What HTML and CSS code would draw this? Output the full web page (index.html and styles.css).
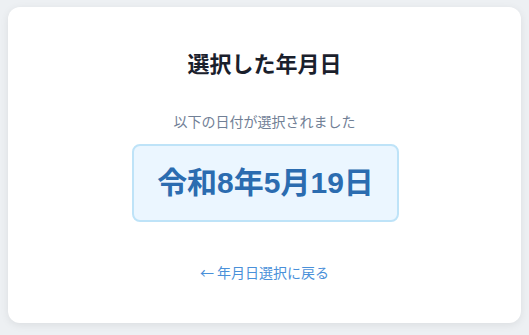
FILE: index.html
```html
<html lang="ja">
  <head>
    <meta charset="UTF-8" />
    <meta name="viewport" content="width=device-width, initial-scale=1.0" />
    <title>選択した年月日</title>
    <link rel="stylesheet" href="styles.css">
  </head>
  <body>
    <div class="card">
      <h1 class="title">選択した年月日</h1>
      <p class="lead">以下の日付が選択されました</p>
      <div class="date-box">
        <span class="date-text">令和8年5月19日</span>
      </div>
      <a class="back-link" href="#">← 年月日選択に戻る</a>
    </div>
  </body>
</html>
```

FILE: styles.css
```css
body {
  font-family: "Liberation Sans", "Noto Sans CJK JP", sans-serif;
  margin: 0;
  padding: 7px 8px;
  background-color: #edf0f3;
}

.card {
  display: flex;
  flex-direction: column;
  align-items: center;
  padding: 40px 20px;
  background-color: #fff;
  border-radius: 12px;
  box-shadow: 0 2px 8px rgba(0, 0, 0, 0.08);
}

.title {
  margin: 0 0 34px;
  font-family: "Noto Sans CJK JP", sans-serif;
  font-size: 22px;
  line-height: 31px;
  font-weight: bold;
  color: #1a202c;
}

.lead {
  margin: 0 0 11px;
  font-size: 14px;
  line-height: 21px;
  color: #718096;
}

.date-box {
  padding: 16px 23px;
  margin-left: 2px;
  background-color: #ebf6ff;
  border: 2px solid #bee3f8;
  border-radius: 8px;
}

.date-text {
  font-size: 30px;
  line-height: 42px;
  font-weight: bold;
  color: #2b6cb0;
}

.back-link {
  margin-top: 40px;
  font-family: "Noto Sans CJK JP", sans-serif;
  font-size: 14px;
  line-height: 21px;
  color: #4a90d9;
  text-decoration: none;
}
```
